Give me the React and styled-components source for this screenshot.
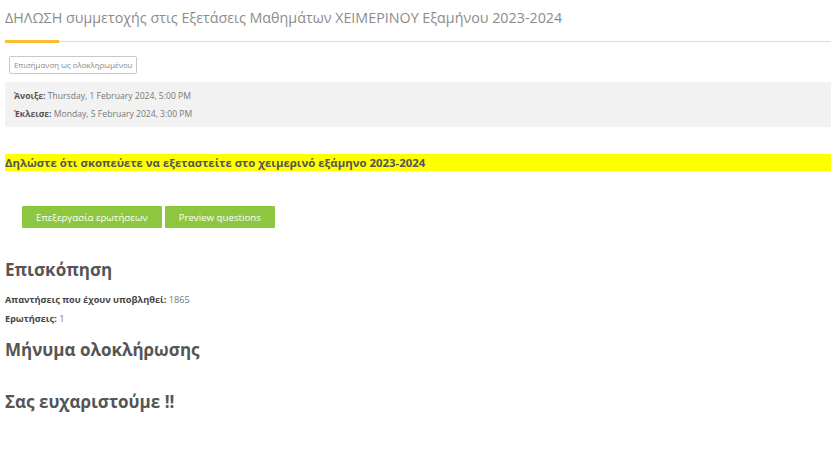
import React from "react";
import styled, { createGlobalStyle } from "styled-components";

const GlobalStyle = createGlobalStyle`
  body {
    margin: 0;
    background: #fff;
    font-family: "Open Sans", "Liberation Sans", sans-serif;
    color: #555;
  }
`;

const App = () => {
  return (
    <>
      <GlobalStyle />
      <Page>
        <TitleBar>
          <Title>ΔΗΛΩΣΗ συμμετοχής στις Εξετάσεις Μαθημάτων ΧΕΙΜΕΡΙΝΟΥ Εξαμήνου 2023-2024</Title>
          <Underline />
        </TitleBar>

        <MarkButton>Επισήμανση ως ολοκληρωμένου</MarkButton>

        <Dates>
          <DateRow>
            <strong>Άνοιξε:</strong> Thursday, 1 February 2024, 5:00 PM
          </DateRow>
          <DateRow>
            <strong>Έκλεισε:</strong> Monday, 5 February 2024, 3:00 PM
          </DateRow>
        </Dates>

        <Highlight>Δηλώστε ότι σκοπεύετε να εξεταστείτε στο χειμερινό εξάμηνο 2023-2024</Highlight>

        <Actions>
          <GreenButton>Επεξεργασία ερωτήσεων</GreenButton>
          <GreenButton>Preview questions</GreenButton>
        </Actions>

        <Heading>Επισκόπηση</Heading>
        <Stats>
          <Stat>
            <strong>Απαντήσεις που έχουν υποβληθεί:</strong> 1865
          </Stat>
          <Stat>
            <strong>Ερωτήσεις:</strong> 1
          </Stat>
        </Stats>

        <Heading $top={10}>Μήνυμα ολοκλήρωσης</Heading>
        <Heading $top={28}>Σας ευχαριστούμε !!</Heading>
      </Page>
    </>
  );
};

const Page = styled.div`
  width: 826px;
  padding: 0 0 0 5px;
`;

const TitleBar = styled.div`
  position: relative;
  border-bottom: 1px solid #dcdcdc;
  padding-top: 8px;
  height: 42px;
  box-sizing: border-box;
`;

const Title = styled.h1`
  margin: 0;
  font-size: 14.3px;
  font-weight: 400;
  line-height: 20px;
  color: #8c8c8c;
  white-space: nowrap;
`;

// Ο πορτοκαλί δείκτης πάνω στη γραμμή
const Underline = styled.span`
  position: absolute;
  left: 0;
  bottom: -2px;
  width: 54px;
  height: 3px;
  background: #f9bd2e;
`;

const MarkButton = styled.button`
  display: block;
  margin: 14px 0 0 4px;
  height: 18px;
  padding: 0 4px;
  border: 1px solid #c8c8c8;
  border-radius: 2px;
  background: #fff;
  font-family: inherit;
  font-size: 7.8px;
  color: #888;
  cursor: pointer;
`;

const Dates = styled.div`
  margin-top: 8px;
  background: #f2f2f2;
  padding: 5px 9px 6px;
  height: 45px;
  box-sizing: border-box;
`;

const DateRow = styled.div`
  font-size: 8.6px;
  line-height: 18px;
  color: #777;

  strong {
    color: #555;
    font-weight: 700;
  }
`;

const Highlight = styled.div`
  margin-top: 27px;
  background: #ffff00;
  height: 17px;
  font-size: 11.4px;
  font-weight: 700;
  line-height: 17px;
  color: #555;
`;

const Actions = styled.div`
  display: flex;
  gap: 3px;
  margin: 35px 0 0 17px;
`;

const GreenButton = styled.button`
  height: 22px;
  padding: 0 14px;
  border: none;
  border-radius: 1px;
  background: #8dc63f;
  color: #fff;
  font-family: inherit;
  font-size: 9.7px;
  cursor: pointer;
`;

const Heading = styled.h2`
  margin: ${({ $top }) => $top ?? 30}px 0 0;
  font-size: 17px;
  font-weight: 700;
  line-height: 24px;
  color: #555;
`;

const Stats = styled.div`
  margin-top: 8px;
`;

const Stat = styled.div`
  font-size: 9.2px;
  line-height: 19px;
  color: #777;

  strong {
    color: #444;
  }
`;

export default App;
